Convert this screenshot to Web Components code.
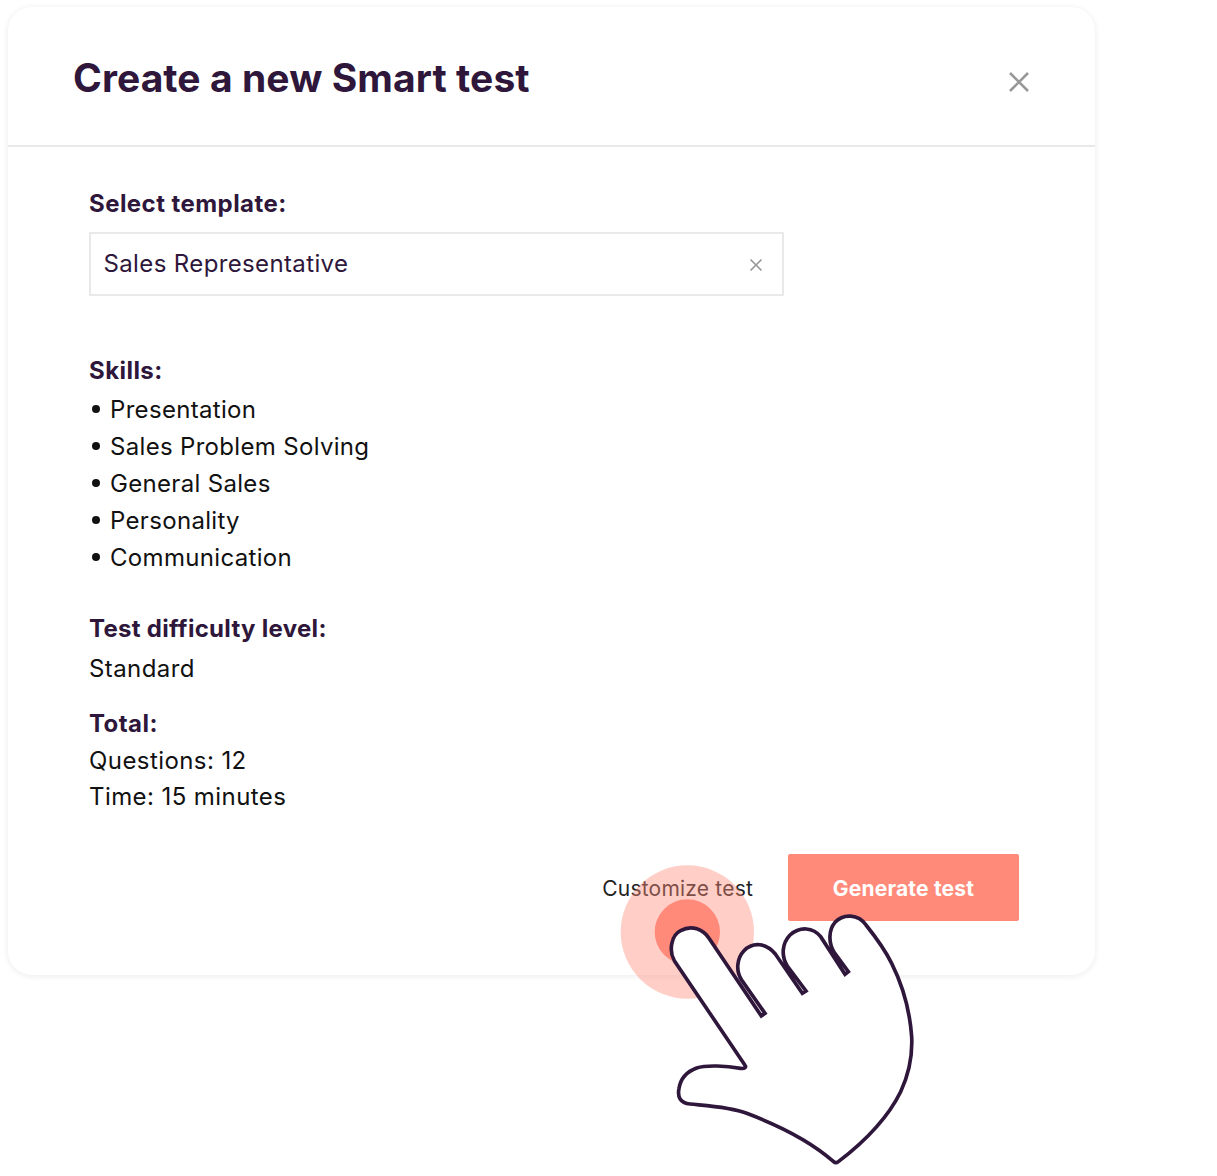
<!DOCTYPE html>
<html><head><meta charset="utf-8"><style>
html,body{margin:0;background:#fff}
body{padding:7px 0 0 8px;height:1169px;box-sizing:border-box;overflow:hidden;position:relative;font-family:Inter,"Liberation Sans",sans-serif}
</style></head><body>
<template id="t-card"><style>
:host{display:block;width:1087px;height:968px;box-sizing:border-box;background:#fff;border-radius:24px;box-shadow:0 1px 6px rgba(40,20,60,.09)}
header{height:140px;box-sizing:border-box;border-bottom:2px solid #e9e9ea;padding:46px 65px 0 66px;display:flex;justify-content:space-between;align-items:flex-start}
h1{margin:0 0 0 -1px;font:700 39px/50px Inter,sans-serif;color:#2e173b;letter-spacing:.08px}
.x{width:24px;height:24px;margin:17px -1px 0 0}
main{padding:42px 76px 0 81px;display:flex;flex-direction:column}
.foot{display:flex;justify-content:flex-end;align-items:center;gap:35px;margin-top:39px}
.link{font:400 21px/24px Inter,sans-serif;color:#222;letter-spacing:.2px;margin-top:2px}
button{all:unset;width:231px;height:67px;background:#ff8a7a;border-radius:2px;color:#fff;font:700 21px/69px Inter,sans-serif;text-align:center;letter-spacing:.2px}
</style><header><h1><slot name="title"></slot></h1><svg class="x" viewBox="0 0 24 24"><path d="M3 3 21 21M21 3 3 21" stroke="#989898" stroke-width="2.6" fill="none"/></svg></header><main><slot></slot><div class="foot"><span class="link">Customize test</span><button>Generate test</button></div></main></template>

<template id="t-select"><style>
:host{display:flex;width:695px;height:64px;box-sizing:border-box;border:2px solid #e9e9ea;align-items:center;justify-content:space-between;padding:0 18px 0 12.5px;font:400 24px/30px Inter,sans-serif;color:#2e173b;margin-top:13px;letter-spacing:.37px}
svg{width:16px;height:16px;margin-top:2px}
</style><slot></slot><svg viewBox="0 0 16 16"><path d="M2.5 2.5 13.5 13.5M13.5 2.5 2.5 13.5" stroke="#989898" stroke-width="1.7" fill="none"/></svg></template>

<template id="t-label"><style>:host{display:block;font:700 24px/30px Inter,sans-serif;color:#2e173b;letter-spacing:.44px}</style><slot></slot></template>

<template id="t-value"><style>:host{display:block;font:400 24px/37px Inter,sans-serif;color:#111;letter-spacing:.42px}</style><slot></slot></template>

<template id="t-skills"><style>:host{display:block;margin-top:5px;font:400 24px/37px Inter,sans-serif;color:#111;letter-spacing:.32px}
ul{list-style:none;margin:0;padding:0}
li{display:flex;gap:8px;height:37px}
.b{width:13px;display:flex;align-items:center;justify-content:center}
.b::before{content:"";width:8px;height:8px;border-radius:50%;background:#111;margin:-1px 0 0 1px}
</style><ul><li><span class="b"></span>Presentation</li><li><span class="b"></span>Sales Problem Solving</li><li><span class="b"></span>General Sales</li><li><span class="b"></span>Personality</li><li><span class="b"></span>Communication</li></ul></template>

<template id="t-hand"><style>
:host{display:block;position:absolute;left:590px;top:840px;width:440px;height:336px;pointer-events:none}
svg{display:block;width:440px;height:336px;overflow:visible}
</style><svg viewBox="0 0 1320 1008">
<circle cx="292" cy="276" r="200" fill="#ff8a7a" fill-opacity=".42"/>
<circle cx="292" cy="276" r="98" fill="#ff8a7a"/>
<path d="M465 676L253 362C235 330 245 285 272 272C305 253 340 268 358 296L514 528L525 520L455 420C437 393 440 355 462 332C490 303 530 310 556 342L637 460L648 453L592 378C573 348 576 310 600 285C630 258 670 262 692 290L765 403L775 395L733 338C715 310 715 270 735 247C760 220 805 222 828 255C860 295 885 330 905 370C940 440 960 520 965 590C968 650 958 700 932 755C895 830 830 900 745 965C740 969 735 969 731 965C680 920 590 865 470 820C420 800 350 797 300 792C270 789 262 770 267 745C272 715 290 695 320 684C350 674 410 678 452 685C465 687 470 680 465 676Z" fill="#fff" stroke="#2e173b" stroke-width="11"/>
</svg></template>

<x-card>
<span slot="title">Create a new Smart test</span>
<x-label>Select template:</x-label>
<x-select>Sales Representative</x-select>
<x-label style="margin-top:60px">Skills:</x-label>
<x-skills></x-skills>
<x-label style="margin-top:38px;letter-spacing:.29px">Test difficulty level:</x-label>
<x-value style="margin-top:6px">Standard</x-value>
<x-label style="margin-top:22px">Total:</x-label>
<x-value style="margin-top:4px;line-height:36px">Questions: 12<br>Time: 15 minutes</x-value>
</x-card>
<x-hand></x-hand>
<script>
for (const n of ['card','select','label','value','skills','hand']) {
  customElements.define('x-'+n, class extends HTMLElement {
    constructor(){super();this.attachShadow({mode:'open'}).appendChild(document.getElementById('t-'+n).content.cloneNode(true));}
  });
}
</script>
</body></html>
